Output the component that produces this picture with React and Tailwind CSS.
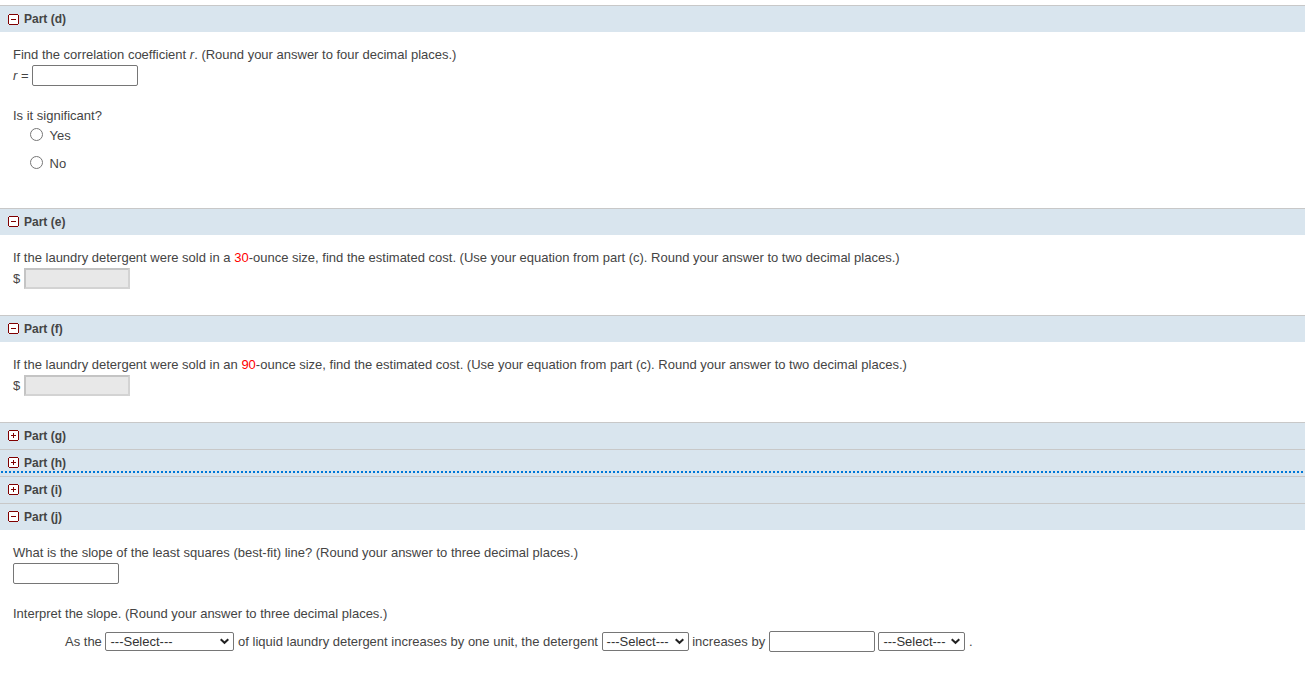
import { useState } from 'react';

const ToggleIcon = ({ open, className }) => (
  <svg width="11" height="11" viewBox="0 0 11 11" shapeRendering="crispEdges" className={`shrink-0 ${className}`}>
    <rect x="1" y="1" width="9" height="9" fill="#fff" />
    <path d="M1 0h9v1h-9zM1 10h9v1h-9zM0 1h1v9h-1zM10 1h1v9h-1z" fill="#800000" />
    <path d="M3 5h5v1h-5z" fill="#800000" />
    {!open && <path d="M5 3h1v5h-1z" fill="#800000" />}
  </svg>
);

const Part = ({ letter, defaultOpen = false, focused = false, iconClass = "mb-px", children }) => {
  const [open, setOpen] = useState(defaultOpen);

  return (
    <div>
      <div
        className="relative flex h-[27px] cursor-pointer items-center gap-[5px] border-t border-[#c8c8c8] bg-[#d9e5ee] pl-2 text-[12px] font-bold"
        onClick={() => setOpen(!open)}
      >
        <ToggleIcon open={open} className={iconClass} />
        <span className="leading-[14px]">Part ({letter})</span>
        {focused && (
          <svg className="absolute top-[21px] left-0 h-0.5 w-full" shapeRendering="crispEdges">
            <line x1="1" y1="1" x2="1303" y2="1" stroke="#0078d7" strokeWidth="2" strokeDasharray="2 2" />
          </svg>
        )}
      </div>
      {open && children}
    </div>
  );
};

const AnswerBox = () => (
  <input type="text" className="h-[21px] w-[106px] shrink-0 rounded-[2px] border border-[#767676] bg-white px-1" />
);

const LockedBox = () => (
  <input type="text" disabled className="h-[21px] w-[106px] shrink-0 border-2 border-t-[#c4c4c4] border-r-[#d3d3d3] border-b-[#d3d3d3] border-l-[#c4c4c4] bg-[#e8e8e8]" />
);

const SelectBox = ({ wide = false }) => (
  <div className={`flex h-[19px] shrink-0 items-center justify-between rounded-[2px] border border-[#767676] bg-white pr-1 pl-1 text-[#333] ${wide ? "w-[129px]" : "w-[87px]"}`}>
    <span>---Select---</span>
    <svg width="9" height="7" viewBox="0 0 9 7" fill="none">
      <path d="M0.7 1.3L4.5 4.8L8.3 1.3" stroke="#222" strokeWidth="2" />
    </svg>
  </div>
);

const Choice = ({ label }) => (
  <label className="flex h-[14px] items-center gap-[6.5px]">
    <input type="radio" name="significant" className="m-0 size-[13px]" />
    <span className="relative top-px">{label}</span>
  </label>
);

const CostQuestion = ({ article, ounces }) => (
  <div className="h-20 pt-[14px] pl-[13px]">
    <p className="h-[19px] leading-[17px]">
      If the laundry detergent were sold in {article} <span className="text-[#f00]">{ounces}</span>-ounce size, find the estimated cost. (Use your equation from part (c). Round your answer to two decimal places.)
    </p>
    <div className="flex items-center gap-1">
      <span>$</span>
      <LockedBox />
    </div>
  </div>
);

const App = () => {
  return (
    <div className="min-h-[676px] w-full overflow-hidden bg-white pt-[5px] font-['Liberation_Sans',Arial,sans-serif] text-[13px] leading-[15px] whitespace-nowrap text-[#444]">
      <Part letter="d" defaultOpen iconClass="mt-px">
        <div className="h-44 pt-[14px] pl-[13px]">
          <p className="h-[19px] leading-[17px]">
            Find the correlation coefficient <i>r</i>. (Round your answer to four decimal places.)
          </p>
          <div className="flex items-center gap-[3px]">
            <span><i>r</i> =</span>
            <AnswerBox />
          </div>
          <p className="mt-5 h-[21px] leading-[19px]">Is it significant?</p>
          <div className="flex flex-col gap-[14px] pl-[17px]">
            <Choice label="Yes" />
            <Choice label="No" />
          </div>
        </div>
      </Part>
      <Part letter="e" defaultOpen>
        <CostQuestion article="a" ounces="30" />
      </Part>
      <Part letter="f" defaultOpen>
        <CostQuestion article="an" ounces="90" />
      </Part>
      <Part letter="g" />
      <Part letter="h" focused />
      <Part letter="i" />
      <Part letter="j" defaultOpen>
        <div className="pt-[14px] pl-[13px]">
          <p className="h-[19px] leading-[17px]">
            What is the slope of the least squares (best-fit) line? (Round your answer to three decimal places.)
          </p>
          <div className="flex">
            <AnswerBox />
          </div>
          <p className="mt-5 h-[27px] leading-[19px]">Interpret the slope. (Round your answer to three decimal places.)</p>
          <div className="flex items-center gap-[3.61px] pl-[52px]">
            <span>As the</span>
            <SelectBox wide />
            <span>of liquid laundry detergent increases by one unit, the detergent</span>
            <SelectBox />
            <span>increases by</span>
            <AnswerBox />
            <SelectBox />
            <span>.</span>
          </div>
        </div>
      </Part>
    </div>
  );
};

export default App;
